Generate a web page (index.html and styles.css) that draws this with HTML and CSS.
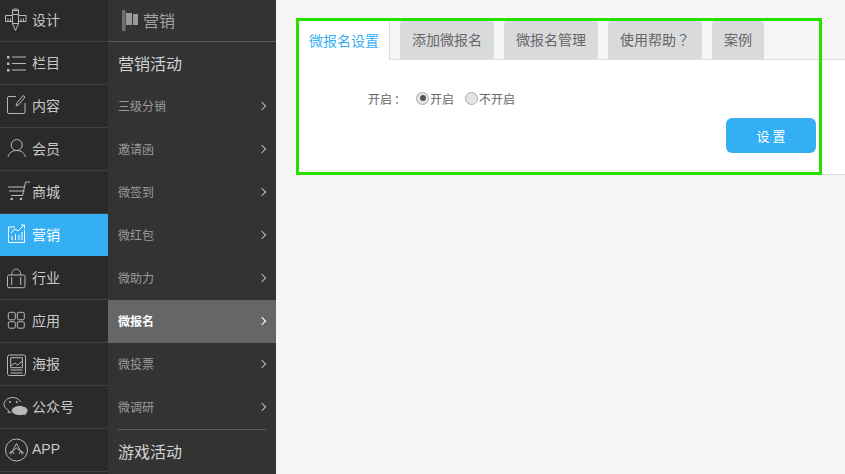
FILE: index.html
```html
<!DOCTYPE html>
<html lang="zh">
<head>
<meta charset="utf-8">
<title>微报名设置</title>
<link rel="stylesheet" href="styles.css">
</head>
<body>
<div class="app">
  <nav class="rail">
    <a class="rail-item first"><svg class="ic" viewBox="0 0 22 23"><path d="M5.500 7.500V3l1-1h4l1 1v4.500M5.500 3.500h6M5.500 7.500h6v9l-3 7-3-7zM5.500 16.500h6M5.500 8.500H-1.500v6h7M11.500 8.500h7.500v6h-7.500M1 14.500v-3M3.500 14.500v-3M14 14.500v-3M16.500 14.500v-3"/></svg><span>设计</span></a>
    <a class="rail-item"><svg class="ic" viewBox="0 0 22 23"><path d="M5 7h14M5 13.500h14M5 20h14"/><path class="dots" d="M0 6h2.500v2.500H0zM0 12.500h2.500V15H0zM0 19h2.500v2.500H0z"/></svg><span>栏目</span></a>
    <a class="rail-item"><svg class="ic" viewBox="0 0 22 23"><path d="M9 3.500H2A1.500 1.500 0 0 0 .5 5v14A1.500 1.500 0 0 0 2 20.500h14.500A1.500 1.500 0 0 0 18 19v-9M9 13l1-3 6-7.500 2 1.500-6 7.500z"/></svg><span>内容</span></a>
    <a class="rail-item"><svg class="ic" viewBox="0 0 22 23"><circle cx="9.700" cy="9" r="5.500"/><path d="M1 21c1-4 4-6.500 8.700-6.500s7.700 2.500 8.700 6.500"/></svg><span>会员</span></a>
    <a class="rail-item"><svg class="ic" viewBox="0 0 22 23"><path d="M23 3h-4.500l-3 14M1 8h17M2 12h15.500M4 16.500h11.500"/><circle class="dots" cx="4.700" cy="20" r="1.300"/><circle class="dots" cx="14" cy="20" r="1.300"/></svg><span>商城</span></a>
    <a class="rail-item active"><svg class="ic" viewBox="0 0 22 23"><path d="M8 5H1.500v15.500h16V8M5 18v-4M8.500 18v-6M12 18v-5M15 18v-8M4 11l4-4 3 2 6-6M14 3h3.500v3.500"/></svg><span>营销</span></a>
    <a class="rail-item"><svg class="ic" viewBox="0 0 22 23"><rect x=".5" y="10" width="17.500" height="12.700" rx="1.500"/><path d="M4.700 10c0-8 9-8 9 0M4.700 12v8M13.700 12v8"/></svg><span>行业</span></a>
    <a class="rail-item"><svg class="ic" viewBox="0 0 22 23"><rect x="1.300" y="4.300" width="7" height="7.500" rx="1.500"/><rect x="10.300" y="4.300" width="7" height="7.500" rx="1.500"/><rect x="1.300" y="13.700" width="7" height="6.500" rx="1.500"/><rect x="10.300" y="13.700" width="7" height="6.500" rx="1.500"/></svg><span>应用</span></a>
    <a class="rail-item"><svg class="ic" viewBox="0 0 22 23"><rect x=".5" y="4" width="18" height="20.500" rx="2"/><path d="M3.700 6.700h11.700v10H3.700zM3.700 15l4-3 3 2 4.500-4M3.700 19h11.700M3.700 22h11.700"/></svg><span>海报</span></a>
    <a class="rail-item"><svg class="ic" viewBox="0 0 22 23"><path d="M6 18.500c-1 0-2-.2-3-.6l-2 1 .5-2.500C-1.500 14.500-3 12.500-3 10.500c0-3.500 3.500-7 8.500-7 4 0 7 2 8 4.500"/><path class="solid" d="M12.500 11.500c4.500 0 8.500 2.200 8.500 5 0 1.500-1 2.800-2 3.500l.5 2-2.500-1c-4.500 1.500-12.500 0-12.500-4.500 0-2.800 4-5 8-5z"/><circle class="dots" cx="3" cy="8" r="1"/><circle class="dots" cx="9.700" cy="8" r="1"/></svg><span>公众号</span></a>
    <a class="rail-item"><svg class="ic" viewBox="0 0 22 23"><circle cx="9.500" cy="13" r="11"/><path d="M9.500 6.500l6 11M9.500 6.500l-6 11M2 16l3.500-2 1.500 3M17 16l-3.500-2-1.500 3M6.500 13.500l3-2.500 3 2.500"/></svg><span class="latin">APP</span></a>
  </nav>

  <aside class="sub">
    <header class="sub-head"><svg class="flag" viewBox="0 0 16 21"><rect class="pole" width="3.500" height="21" rx="1"/><path d="M4 3h6v12H4zM11 4h5v11h-5z"/></svg><span>营销</span></header>
    <h2 class="sub-title">营销活动</h2>
    <ul class="sub-list">
      <li class="sub-item"><span>三级分销</span><i class="chev"></i></li>
      <li class="sub-item"><span>邀请函</span><i class="chev"></i></li>
      <li class="sub-item"><span>微签到</span><i class="chev"></i></li>
      <li class="sub-item"><span>微红包</span><i class="chev"></i></li>
      <li class="sub-item"><span>微助力</span><i class="chev"></i></li>
      <li class="sub-item current"><span>微报名</span><i class="chev"></i></li>
      <li class="sub-item"><span>微投票</span><i class="chev"></i></li>
      <li class="sub-item"><span>微调研</span><i class="chev"></i></li>
    </ul>
    <h2 class="sub-title ruled">游戏活动</h2>
  </aside>

  <main class="main">
    <section class="panel">
      <div class="tabs">
        <a class="tab on">微报名设置</a>
        <a class="tab">添加微报名</a>
        <a class="tab">微报名管理</a>
        <a class="tab">使用帮助<span class="punct">？</span></a>
        <a class="tab short">案例</a>
      </div>
      <div class="panel-body">
        <div class="field">
          <span class="field-label">开启<span class="punct colon">：</span></span>
          <label class="radio"><i class="dot checked"></i>开启</label>
          <label class="radio"><i class="dot"></i>不开启</label>
        </div>
        <div class="actions"><button class="btn" type="button">设 置</button></div>
      </div>
      <div class="highlight"></div>
    </section>
  </main>
</div>
</body>
</html>
```
FILE: styles.css
```css
* { box-sizing: border-box; }
html, body { margin: 0; height: 100%; overflow: hidden; }
body { font-family: "Noto Sans CJK SC", "Liberation Sans", sans-serif; background: #f5f5f5; }
.app { display: flex; height: 474px; }

.rail { width: 108px; flex: none; background: #2a2a2a; }
.rail-item { display: flex; align-items: center; gap: 3px; height: 43px; padding: 0 0 3px 5px; color: #c9c9c9; font-size: 14px; border-bottom: 1px solid #404040; }
.rail-item.first { height: 42px; padding-bottom: 4px; }
.rail-item.active { background: #35aff4; color: #fff; border-bottom-color: #2a2a2a; }
.rail-item .latin { font-family: "Liberation Sans", sans-serif; }
.ic { width: 22px; height: 23px; flex: none; margin-left: 2px; overflow: visible; fill: none; stroke: #b8b8b8; stroke-width: 1; }
.ic .dots { fill: #b8b8b8; stroke: none; }
.ic .solid { fill: #b8b8b8; stroke: #2a2a2a; }
.active .ic { stroke: #fff; }

.sub { width: 168px; flex: none; background: #333; color: #9b9b9b; }
.sub-head { display: flex; align-items: center; gap: 5px; height: 42px; padding: 0 0 1px 14px; font-size: 16px; color: #a3a3a3; border-bottom: 1px solid #5c5c5c; }
.flag { width: 16px; height: 21px; fill: #999; }
.flag .pole { fill: #707070; }
.sub-title { margin: 0; height: 43px; padding-left: 10px; line-height: 43px; font-size: 16px; font-weight: 400; color: #d2d2d2; }
.sub-title.ruled { position: relative; height: 44px; line-height: 44px; }
.sub-title.ruled::before { content: ""; position: absolute; left: 10px; right: 10px; top: 0; border-top: 1px solid #5c5c5c; }
.sub-list { list-style: none; margin: 0; padding: 0; }
.sub-item { display: flex; align-items: center; justify-content: space-between; height: 43px; padding: 0 10px 2px 10px; font-size: 12px; }
.sub-item.current { background: #666; color: #fff; font-weight: 700; }
.chev { width: 6px; height: 6px; margin-right: 1px; border-top: 1.400px solid #bbb; border-right: 1.400px solid #bbb; transform: rotate(45deg); }
.current .chev { border-color: #fff; }

.main { flex: 1; min-width: 0; padding: 21px 0 0 23px; }
.panel { position: relative; height: 154px; background: #fff; border-bottom: 1px solid #dcdcdc; }
.tabs { display: flex; gap: 10px; height: 39px; background: #f5f5f5; border-bottom: 1px solid #dcdcdc; }
.tab { display: flex; align-items: center; justify-content: center; width: 94px; height: 38px; padding-bottom: 2px; background: #d9dadc; border-radius: 3px 3px 0 0; color: #666; font-size: 14px; }
.tab.on { width: 91px; height: 39px; background: #fff; color: #35aff4; border-right: 1px solid #dcdcdc; }
.tab.short { width: 52px; }
.punct { font-family: "Noto Sans CJK TC", sans-serif; }
.colon { margin-left: 2px; }

.panel-body { padding: 28px 5px 0 0; }
.field { display: flex; align-items: center; height: 20px; padding-left: 69px; font-size: 12px; color: #666; }
.field-label { width: 48px; white-space: nowrap; }
.radio { display: flex; align-items: center; margin-right: 11px; }
.dot { position: relative; width: 13px; height: 13px; margin-right: 1px; border-radius: 50%; background: #e4e4e4; border: 1px solid #aaa; }
.dot.checked::after { content: ""; position: absolute; left: 2.500px; top: 2.500px; width: 6px; height: 6px; border-radius: 50%; background: #555; }
.actions { display: flex; justify-content: flex-end; margin-top: 10px; padding-right: 24px; }
.btn { width: 90px; height: 35px; padding: 0; border: 0; border-radius: 6px; background: #35aff4; color: #fff; font: 13px "Noto Sans CJK SC", sans-serif; }

.highlight { position: absolute; left: -3px; top: -3px; width: 526px; height: 157px; border: 3px solid #28e000; pointer-events: none; }
```
